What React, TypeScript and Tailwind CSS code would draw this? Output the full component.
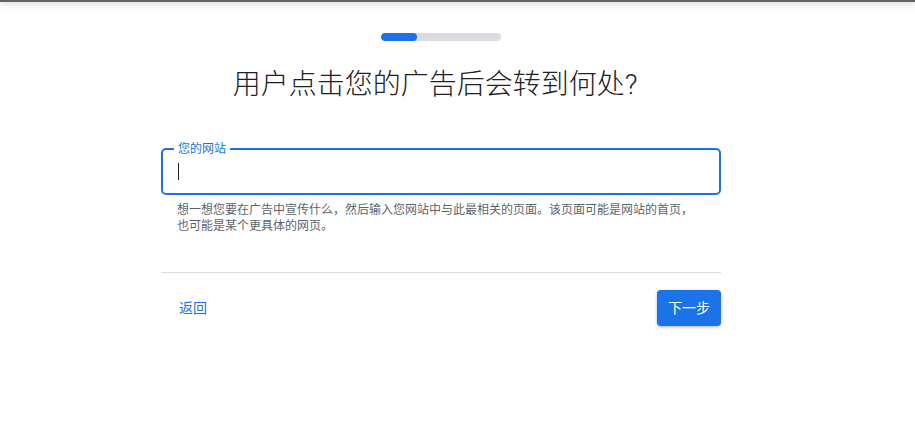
import React from 'react';

const FONT = { fontFamily: 'Roboto, "Noto Sans CJK SC", sans-serif' };

export default function App() {
  return (
    <div className="min-h-[423px] bg-white flex flex-col" style={FONT}>
      {/* top edge shadow */}
      <div className="h-[2px] bg-[#5f6368] shadow-[0_1px_6px_rgba(60,64,67,0.5)]" />

      <div className="pr-[33px]">
        <div className="w-[560px] mx-auto flex flex-col">
          {/* progress */}
          <div className="mt-[31px] self-center w-[120px] h-[8px] rounded-full bg-[#dadce0] overflow-hidden">
            <div className="w-[36px] h-full rounded-full bg-[#1a73e8]" />
          </div>

          <h1 className="mt-[26px] pr-[12px] text-center text-[28px] leading-[36px] font-light text-[#202124]">
            用户点击您的广告后会转到何处?
          </h1>

          {/* website field */}
          <div className="mt-[45px] relative h-[47px] rounded-[5px] border-2 border-[#1a73e8] flex items-center px-[15px]">
            <span className="absolute -top-[9px] left-[11px] bg-white px-[4px] text-[12px] leading-[16px] text-[#1a73e8]">
              您的网站
            </span>
            <span className="w-px h-[17px] bg-[#202124]" />
          </div>

          <p className="mt-[7px] pl-[16px] pr-[24px] text-[12px] leading-[16px] text-[#5f6368]">
            想一想您要在广告中宣传什么，然后输入您网站中与此最相关的页面。该页面可能是网站的首页，也可能是某个更具体的网页。
          </p>

          <div className="mt-[38px] h-px bg-[#dadce0]" />

          <div className="mt-[17px] flex items-center justify-between">
            <button className="ml-[8px] px-[10px] h-[36px] text-[14px] text-[#1a73e8]">返回</button>
            <button className="w-[64px] h-[36px] rounded-[4px] bg-[#1a73e8] text-white text-[14px] shadow-[0_1px_3px_rgba(60,64,67,0.4)]">
              下一步
            </button>
          </div>
        </div>
      </div>
    </div>
  );
}
